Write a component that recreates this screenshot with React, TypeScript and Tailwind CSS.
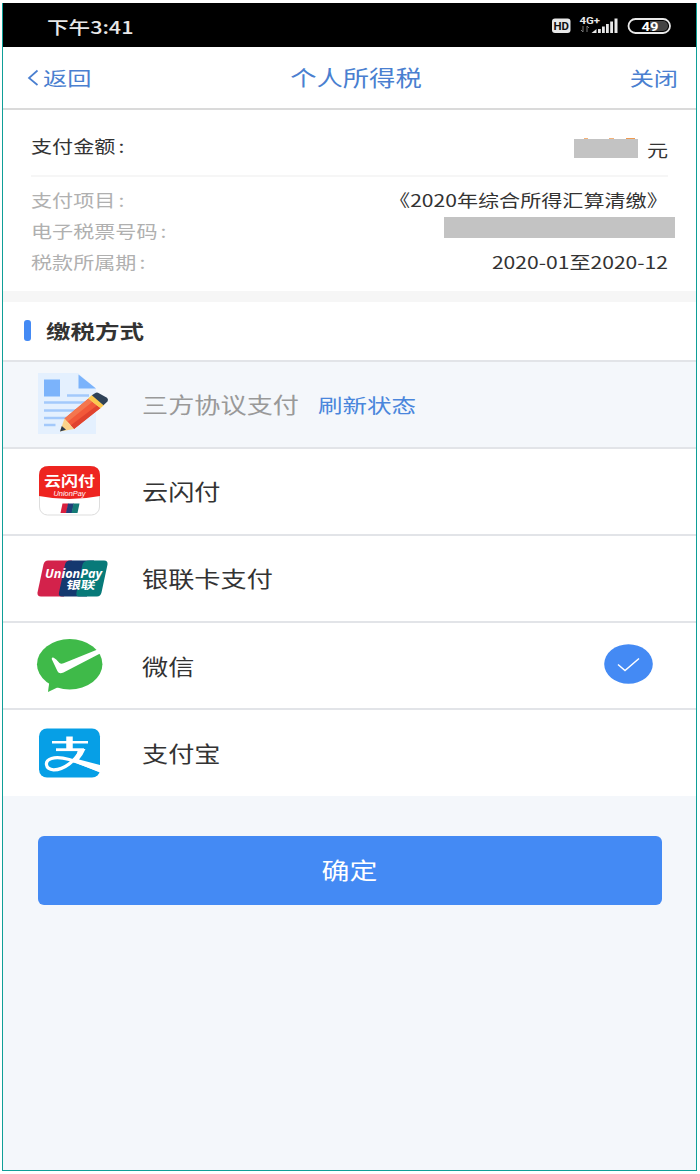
import type { ReactNode } from "react";
import clsx from "clsx";

type Method = {
  name: string;
  icon: ReactNode;
  disabled?: boolean;
  action?: string;
  selected?: boolean;
};

function Wide({ children, className }: { children: ReactNode; className?: string }) {
  return (
    <span className={clsx("inline-block scale-x-[1.24] whitespace-nowrap", className)}>
      {children}
    </span>
  );
}

function Label({ children, className }: { children: ReactNode; className?: string }) {
  return (
    <Wide className={clsx("origin-left", className)}>
      {children}
      <span className="ml-[2.5px]">:</span>
    </Wide>
  );
}

function AgreementIcon() {
  return (
    <svg viewBox="0 0 110 90" className="h-[90px] w-[110px]">
      <path d="M18 14h40l18 16v45H18z" fill="#e4f0fe" />
      <rect x="24" y="20.500" width="16" height="17" fill="#7bb3fb" />
      <path d="M58.500 15.500L76 29.500H58.500z" fill="#7bb3fb" />
      <path
        d="M47 36.500h22M24 43.500h45M24 51.500h36M24 59h24M24 66h11.500"
        stroke="#a3c9fb"
        strokeWidth="2.400"
      />
      <path d="M44.500 59.500l24-20 12 9.500-26.500 21z" fill="#f2593a" />
      <path d="M44.500 59.500l24-20 4 3.200L47.500 63z" fill="#f4764f" />
      <path d="M50.500 66.500L77 46.500l3.500 2.500L54 70z" fill="#e0432f" />
      <path d="M40 72.500l4.500-13 9.500 10.500z" fill="#fbd38b" />
      <path d="M40 72.500l1.800-5.500 4.200 3.700z" fill="#2b3a4c" />
      <path d="M68 39.500l4-3.500L84 46l-3.500 3.200z" fill="#fbc94f" />
      <path d="M71.800 36.200L75 34.200q1.500-1 3-.400l9 5q1.500 1.300.700 3.400L83.500 46.300z" fill="#2f4257" />
    </svg>
  );
}

function QuickPassIcon() {
  return (
    <svg viewBox="0 0 110 90" className="h-[90px] w-[110px]">
      <rect x="19.500" y="20.500" width="60" height="48.500" rx="8" fill="#fff" stroke="#ddd" />
      <path d="M19 50V29q0-9 10-9h41q10 0 10 9v21q-31 6-61 0z" fill="#ee2420" />
      <text
        x="49.500"
        y="39.500"
        textAnchor="middle"
        textLength="51"
        lengthAdjust="spacingAndGlyphs"
        fontSize="13.500"
        fontWeight="700"
        fill="#fff"
        fontFamily="'Noto Sans CJK SC', sans-serif"
      >
        云闪付
      </text>
      <text
        x="49.500"
        y="49.700"
        textAnchor="middle"
        textLength="32"
        lengthAdjust="spacingAndGlyphs"
        fontSize="6.300"
        fontStyle="italic"
        fill="#fff"
        fontFamily="'Liberation Sans', sans-serif"
      >
        UnionPay
      </text>
      <path d="M42.500 57.500h6l-2 9.500h-6z" fill="#d8203f" />
      <path d="M48 57.500h6L52 67h-6z" fill="#1f3f7a" />
      <path d="M53.500 57.500h6l-2 9.500h-6z" fill="#147a76" />
    </svg>
  );
}

function UnionPayIcon() {
  return (
    <svg viewBox="0 -1.500 110 90" className="h-[90px] w-[110px]">
      <path d="M28 26h24l-8 36H21q-4 0-3.500-4l6-28q1-4 4.500-4z" fill="#d3224b" />
      <path d="M50 26h24l-7 36H42q-4 0-3-4l6-28q1-4 5-4z" fill="#14386f" />
      <path d="M70 26h14q4 0 3.500 4l-6 28q-1 4-4.500 4H59q-3.500 0-2.500-4l6-28q1-4 7.500-4z" fill="#077a79" />
      <text
        x="25"
        y="43"
        textLength="57"
        lengthAdjust="spacingAndGlyphs"
        fontSize="11.500"
        fontWeight="700"
        fontStyle="italic"
        fill="#fff"
        fontFamily="'Open Sans', sans-serif"
      >
        UnionPay
      </text>
      <text
        x="46"
        y="55"
        textLength="29"
        lengthAdjust="spacingAndGlyphs"
        fontSize="11"
        fontWeight="700"
        fill="#fff"
        fontFamily="'Noto Sans CJK SC', sans-serif"
        transform="translate(9.500 0) skewX(-10)"
      >
        银联
      </text>
    </svg>
  );
}

function WechatIcon() {
  return (
    <svg viewBox="0 0 110 90" className="h-[90px] w-[110px]">
      <ellipse cx="49.700" cy="43.200" rx="32.700" ry="25.200" fill="#3fba49" />
      <path d="M29.500 59.500L28 71l12.500-6z" fill="#3fba49" />
      <path
        d="M31.700 38q0-1.800 2-1.300l2.500 1.800 3.300 3.500q1.500 1.200 4 .300L77.500 28.500l5.500 2.500-39.500 20.500q-4.500 2-6-1.300z"
        fill="#fff"
      />
    </svg>
  );
}

function AlipayIcon() {
  return (
    <svg viewBox="0 0 110 90" className="h-[90px] w-[110px]">
      <rect x="19" y="20.500" width="61" height="49" rx="8" fill="#069fe6" />
      <g fill="none" stroke="#fff">
        <path d="M49.500 28.500v13" strokeWidth="6.500" />
        <path d="M32 34.300h36" strokeWidth="2.600" />
        <path d="M36 41.700h28" strokeWidth="2.800" />
        <path
          d="M61 42C55 53 44 62 33.500 61.800c-8.500-.500-9.500-9-2-11.300C41 47.500 54 52.500 79 62"
          strokeWidth="3.200"
        />
      </g>
      <path d="M58 41h7.500q-2.500 6-6.500 10.500L80 57v7.500L53.500 54q3-5 4.500-13z" fill="#fff" />
    </svg>
  );
}

function StatusBar() {
  return (
    <div className="flex h-[44px] items-center bg-black pr-[24px] pl-[44px] text-[#e8e8e8]">
      <Wide className="mt-[3px] origin-left text-[17.4px] leading-6 font-medium">下午3:41</Wide>
      <svg viewBox="0 0 120 30" className="mt-[2px] ml-auto h-[30px] w-[120px]">
        <rect y="7.500" width="18.500" height="14.500" rx="3" fill="#e8e8e8" />
        <text
          x="1.500"
          y="19"
          textLength="15.500"
          lengthAdjust="spacingAndGlyphs"
          fontSize="11"
          fontWeight="700"
          fill="#111"
          fontFamily="Roboto, sans-serif"
        >
          HD
        </text>
        <text
          x="27.500"
          y="12.500"
          textLength="20.500"
          lengthAdjust="spacingAndGlyphs"
          fontSize="9.500"
          fontWeight="700"
          fill="#e8e8e8"
          fontFamily="Roboto, sans-serif"
        >
          4G+
        </text>
        <path d="M31 15v6l-2-2M35 21v-6l2 2" fill="none" stroke="#777" />
        <path
          d="M39.500 22l5-4v4zM46 18h2.800v4H46zM50 15.500h2.800V22H50zM54 13h2.800v9H54zM58.200 10.500H61V22h-2.800zM62.500 7.500h3V22h-3z"
          fill="#e8e8e8"
        />
        <rect x="76.500" y="8" width="41.500" height="14" rx="7" fill="#000" stroke="#e8e8e8" strokeWidth="1.800" />
        <path d="M98 10h13a5 5 0 010 10H98z" fill="#444" />
        <text
          x="89.500"
          y="19.500"
          textLength="17"
          lengthAdjust="spacingAndGlyphs"
          fontSize="12.500"
          fontWeight="700"
          fill="#fff"
          fontFamily="Roboto, sans-serif"
        >
          49
        </text>
      </svg>
    </div>
  );
}

function NavBar() {
  return (
    <div className="flex h-[63px] items-center justify-between border-b-2 border-[#dadada] pr-[18px] pl-[24px] text-[#4a7fd0]">
      <div className="flex w-[106px] items-center gap-[4px]">
        <svg viewBox="0 0 12 18" className="h-[18px] w-[12px]" fill="none" stroke="currentColor" strokeWidth="1.700">
          <path d="M10.500 1.500L2 9l8.500 7" />
        </svg>
        <Wide className="origin-left text-[19.5px] leading-6">返回</Wide>
      </div>
      <Wide className="-mt-px text-[21.200px] leading-6">个人所得税</Wide>
      <div className="flex w-[100px] justify-end">
        <Wide className="origin-right text-[19.5px] leading-6">关闭</Wide>
      </div>
    </div>
  );
}

function Summary() {
  return (
    <section className="h-[181px] px-[28px] pt-[20px] text-[17px] leading-[31px] text-[#333]">
      <div className="flex h-[47px] border-b-2 border-[#f6f6f6]">
        <Label>支付金额</Label>
        <div className="mt-[4px] ml-auto flex">
          <div className="relative mt-[5px] mr-[13px] h-[19px] w-[64px] bg-[#c3c3c3]">
            <span className="absolute -top-px left-[10px] h-px w-[4px] bg-[#f3b27a]" />
            <span className="absolute -top-px left-[35px] h-px w-[5px] bg-[#f3b27a]" />
            <span className="absolute -top-px left-[52px] h-px w-[9px] bg-[#ef9a50]" />
          </div>
          <Wide className="origin-right">元</Wide>
        </div>
      </div>
      <div className="mt-[7px] flex justify-between">
        <Label className="text-[#b0b0b0]">支付项目</Label>
        <Wide className="origin-right">《2020年综合所得汇算清缴》</Wide>
      </div>
      <div className="flex justify-between">
        <Label className="text-[#b0b0b0]">电子税票号码</Label>
        <div className="mt-[2px] -mr-[7px] h-[21px] w-[231px] bg-[#c3c3c3]" />
      </div>
      <div className="flex justify-between">
        <Label className="text-[#b0b0b0]">税款所属期</Label>
        <Wide className="origin-right">2020-01至2020-12</Wide>
      </div>
    </section>
  );
}

const methods: Method[] = [
  { name: "三方协议支付", icon: <AgreementIcon />, disabled: true, action: "刷新状态" },
  { name: "云闪付", icon: <QuickPassIcon /> },
  { name: "银联卡支付", icon: <UnionPayIcon /> },
  { name: "微信", icon: <WechatIcon />, selected: true },
  { name: "支付宝", icon: <AlipayIcon /> },
];

function MethodRow({ method }: { method: Method }) {
  return (
    <div
      className={clsx(
        "flex h-[87.200px] items-center border-t-2 border-[#e2e4e8] pr-[43px] pl-[17px]",
        method.disabled ? "bg-[#f4f7fb] text-[#999]" : "bg-white text-[#333]",
      )}
    >
      {method.icon}
      <Wide className="ml-[12px] origin-left text-[21.100px] leading-8">{method.name}</Wide>
      {method.action && (
        <Wide className="mt-px ml-[49px] origin-left text-[19.8px] leading-8 text-[#4a86dc]">
          {method.action}
        </Wide>
      )}
      {method.selected && (
        <svg viewBox="0 0 50 40" className="-mt-[3px] ml-auto h-[40px] w-[50px]">
          <ellipse cx="25.500" cy="20" rx="24.300" ry="19.700" fill="#448af4" />
          <path d="M15 20.500l7 6 14-12" fill="none" stroke="#fff" strokeWidth="1.500" />
        </svg>
      )}
    </div>
  );
}

export default function App() {
  return (
    <div className="h-[1174px] w-[700px] bg-white pt-[3px] pl-[2px] font-['Noto_Sans_CJK_SC',sans-serif]">
      <div className="h-[1168px] w-[695px] border-x border-b border-[#0f9f98] bg-[#f4f7fb]">
        <StatusBar />
        <div className="h-[749px] bg-white">
          <NavBar />
          <Summary />
          <div className="h-[11px] bg-[#f6f6f6]" />
          <div className="flex h-[57.500px] items-center pl-[21px]">
            <span className="h-[21px] w-[7px] rounded-[3px] bg-[#448af4]" />
            <Wide className="ml-[15px] origin-left text-[19.8px] leading-8 font-bold text-[#333]">
              缴税方式
            </Wide>
          </div>
          {methods.map((method) => (
            <MethodRow key={method.name} method={method} />
          ))}
        </div>
        <button className="mt-[40px] ml-[35px] flex h-[69px] w-[624px] items-center justify-center rounded-[6px] bg-[#448af4] text-white">
          <Wide className="-mt-[4px] text-[22.5px] leading-8">确定</Wide>
        </button>
      </div>
    </div>
  );
}
